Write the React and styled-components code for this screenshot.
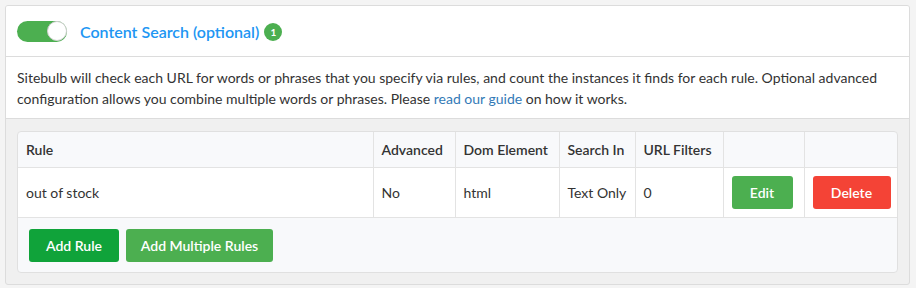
import React from 'react';
import styled, { createGlobalStyle } from 'styled-components';

const GlobalStyle = createGlobalStyle`
  body {
    margin: 0;
    padding: 5px 6px 4px 5px;
    background: #f4f4f4;
    font-family: Lato, "Open Sans", sans-serif;
    font-size: 14px;
    color: #333;
  }
`

const Panel = styled.div`
  border: 1px solid #dcdcdc;
  border-radius: 3px;
  background: #f0f0f0;
  overflow: hidden;
`
const Header = styled.div`
  display: flex;
  align-items: center;
  height: 50px;
  padding: 0 11px;
  background: #fff;
  border-bottom: 1px solid #dcdcdc;
`
const Toggle = styled.div`
  width: 50px;
  height: 21px;
  border-radius: 11px;
  background: #4caf50;
  display: flex;
  justify-content: flex-end;
  align-items: center;
  flex-shrink: 0;
`
const Knob = styled.div`
  width: 20px;
  height: 20px;
  border-radius: 50%;
  background: #fff;
  border: 1px solid #cfcfcf;
  box-sizing: border-box;
`
const Title = styled.span`
  margin-left: 13px;
  font-size: 16px;
  font-weight: 600;
  color: #2196f3;
`
const Badge = styled.span`
  margin-left: 5px;
  margin-top: 2px;
  width: 18px;
  height: 18px;
  border-radius: 50%;
  background: #4caf50;
  color: #fff;
  font-size: 10px;
  font-weight: 700;
  display: flex;
  align-items: center;
  justify-content: center;
`
const Description = styled.div`
  background: #fff;
  padding: 10px 11px 9px;
  line-height: 21px;
  border-bottom: 1px solid #dcdcdc;
`
const Link = styled.a`
  color: #337ab7;
  text-decoration: none;
`
const Body = styled.div`
  padding: 12px 11px 11px 11px;
`
const Box = styled.div`
  border: 1px solid #e0e0e0;
  border-radius: 4px;
  background: #f8f9fb;
  overflow: hidden;
`
const Table = styled.table`
  width: 100%;
  border-collapse: collapse;
  table-layout: fixed;
`
const Th = styled.th`
  height: 35px;
  padding: 0 8px;
  text-align: left;
  font-weight: 600;
  color: #333;
  border-left: 1px solid #e3e3e3;
  border-bottom: 1px solid #e3e3e3;
  &:first-child { border-left: none; }
`
const Td = styled.td`
  height: 49px;
  padding: 0 8px;
  background: #fff;
  border-left: 1px solid #e3e3e3;
  border-bottom: 1px solid #e3e3e3;
  &:first-child { border-left: none; }
`
const Button = styled.button`
  height: 33px;
  width: ${p => p.w}px;
  padding: 0;
  border: none;
  border-radius: 3px;
  font-family: inherit;
  font-size: 14px;
  font-weight: 600;
  color: #fff;
  cursor: pointer;
  background: ${p => p.color};
`
const Footer = styled.div`
  display: flex;
  gap: 7px;
  padding: 11px 11px 10px;
`

const columns = [
  { label: 'Rule', width: 355 },
  { label: 'Advanced', width: 82 },
  { label: 'Dom Element', width: 104 },
  { label: 'Search In', width: 76 },
  { label: 'URL Filters', width: 88 },
  { label: '', width: 81 },
  { label: '', width: 96 },
];

const rules = [
  { rule: 'out of stock', advanced: 'No', dom: 'html', searchIn: 'Text Only', filters: '0' },
];

export default function App() {
  return (
    <>
      <GlobalStyle />
      <Panel>
        <Header>
          <Toggle><Knob /></Toggle>
          <Title>Content Search (optional)</Title>
          <Badge>1</Badge>
        </Header>
        <Description>
          Sitebulb will check each URL for words or phrases that you specify via rules, and count the instances it finds for each rule. Optional advanced configuration allows you combine multiple words or phrases. Please <Link href="#">read our guide</Link> on how it works.
        </Description>
        <Body>
          <Box>
            <Table>
              <colgroup>
                {columns.map((c, i) => <col key={i} style={{ width: c.width }} />)}
              </colgroup>
              <thead>
                <tr>
                  {columns.map((c, i) => <Th key={i}>{c.label}</Th>)}
                </tr>
              </thead>
              <tbody>
                {rules.map((r, i) => (
                  <tr key={i}>
                    <Td>{r.rule}</Td>
                    <Td>{r.advanced}</Td>
                    <Td>{r.dom}</Td>
                    <Td>{r.searchIn}</Td>
                    <Td>{r.filters}</Td>
                    <Td><Button w={61} color="#4caf50">Edit</Button></Td>
                    <Td><Button w={78} color="#f44336">Delete</Button></Td>
                  </tr>
                ))}
              </tbody>
            </Table>
            <Footer>
              <Button w={90} color="#10a33a">Add Rule</Button>
              <Button w={147} color="#4caf50">Add Multiple Rules</Button>
            </Footer>
          </Box>
        </Body>
      </Panel>
    </>
  );
}
